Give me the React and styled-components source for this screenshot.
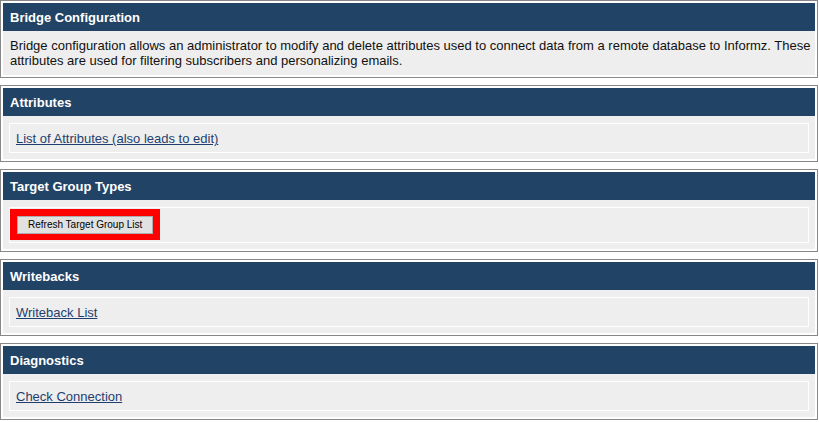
import styled, { createGlobalStyle } from "styled-components";

const GlobalStyle = createGlobalStyle`
  body {
    margin: 0;
    background: #fff;
    font-family: "Liberation Sans", Arial, sans-serif;
  }
`;

const Page = styled.div`
  width: 818px;
  display: flex;
  flex-direction: column;
  gap: 7px;
`;

const Section = styled.div`
  border: 1px solid #888;
  padding: 2px;
  background: #fff;
`;

const Header = styled.div`
  height: 28px;
  display: flex;
  align-items: center;
  padding-left: 7px;
  background: #214366;
  color: #fff;
  font-size: 13px;
  font-weight: bold;
`;

const Body = styled.div`
  background: #eee;
  padding: ${(p) => (p.$text ? "7px 0 7px 7px" : "7px 6px 6px")};
  color: #111;
  font-size: 13px;
  line-height: 15px;
`;

const Intro = styled.p`
  margin: 0;
`;

const Box = styled.div`
  border: 1px solid #fff;
  padding: ${(p) => (p.$tight ? "1px 0 2px" : "7px 6px 6px")};
  line-height: 15px;
  height: ${(p) => (p.$tight ? "auto" : "30px")};
  box-sizing: border-box;
`;

const Link = styled.a`
  color: #1f3e6e;
  text-decoration: underline;
  cursor: pointer;
`;

const Highlight = styled.div`
  display: inline-block;
  border: 7px solid #ff0000;
  border-bottom-width: 6px;
  vertical-align: top;
`;

const Button = styled.button`
  display: block;
  height: 18px;
  margin: 0;
  padding: 0 10px;
  background: #e1e1e1;
  border: 1px solid #adadad;
  color: #000;
  font-family: "Liberation Sans", Tahoma, sans-serif;
  font-size: 10px;
  line-height: 16px;
`;

function Panel({ title, text, children }) {
  return (
    <Section>
      <Header>{title}</Header>
      <Body $text={text}>{children}</Body>
    </Section>
  );
}

export default function App() {
  return (
    <>
      <GlobalStyle />
      <Page>
        <Panel title="Bridge Configuration" text>
          <Intro>
            Bridge configuration allows an administrator to modify and delete
            attributes used to connect data from a remote database to Informz.
            These attributes are used for filtering subscribers and
            personalizing emails.
          </Intro>
        </Panel>
        <Panel title="Attributes">
          <Box>
            <Link>List of Attributes (also leads to edit)</Link>
          </Box>
        </Panel>
        <Panel title="Target Group Types">
          <Box $tight>
            <Highlight>
              <Button>Refresh Target Group List</Button>
            </Highlight>
          </Box>
        </Panel>
        <Panel title="Writebacks">
          <Box>
            <Link>Writeback List</Link>
          </Box>
        </Panel>
        <Panel title="Diagnostics">
          <Box>
            <Link>Check Connection</Link>
          </Box>
        </Panel>
      </Page>
    </>
  );
}
